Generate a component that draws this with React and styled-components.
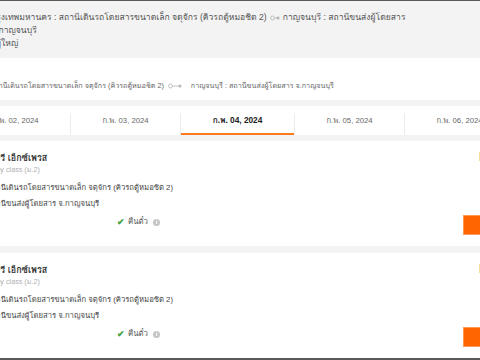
import React from "react";
import styled, { createGlobalStyle } from "styled-components";

const GlobalStyle = createGlobalStyle`
  html, body { margin: 0; padding: 0; background: #f3f3f3; overflow: hidden; }
  body { font-family: Tahoma, "Liberation Sans", Loma, Garuda, "Noto Sans Thai", sans-serif; }
`;

const Frame = styled.div`
  width: 480px;
  height: 360px;
  box-sizing: border-box;
  border-top: 1px solid #5a5a5a;
  border-bottom: 2px solid #5a5a5a;
  background: #f3f3f3;
  overflow: hidden;
`;

const Inner = styled.div`
  margin-left: -40px;
  width: 600px;
  display: flex;
  flex-direction: column;
`;

const Header = styled.div`
  background: #f3f3f3;
  padding: 10px 0 8px 31px;
  height: 57px;
  box-sizing: border-box;
  color: #555;
  font-size: 8.6px;
  line-height: 13px;
`;

const HeaderText = styled.div`
  width: 435px;
  padding-left: ${(p) => p.$indent || 0}px;
`;

const RouteBar = styled.div`
  background: #fff;
  height: 42px;
  box-sizing: border-box;
  padding: 21px 0 0 30px;
  color: #666;
  font-size: 7.2px;
  line-height: 14px;
  margin-bottom: 6px;
  white-space: nowrap;
`;

const Connector = styled.svg`
  display: inline-block;
  vertical-align: middle;
  margin: 0 ${(p) => p.$right}px 0 ${(p) => p.$left}px;
`;

const Tabs = styled.div`
  background: #fff;
  height: 29px;
  display: flex;
  align-items: stretch;
  padding-left: 1px;
  margin-bottom: 6px;
`;

const Tab = styled.div`
  flex: 0 0 ${(p) => (p.$active ? 113 : 109)}px;
  display: flex;
  align-items: center;
  justify-content: center;
  box-sizing: border-box;
  font-size: ${(p) => (p.$active ? 8.3 : 7.7)}px;
  color: ${(p) => (p.$active ? "#222" : "#666")};
  font-weight: ${(p) => (p.$active ? 700 : 400)};
  border-bottom: 2px solid ${(p) => (p.$active ? "#ff7a1f" : "transparent")};
  padding-top: 1px;
  white-space: nowrap;
`;

const Divider = styled.div`
  flex: 0 0 1px;
  background: #ececec;
  margin: 7px 0 0;
`;

const Card = styled.div`
  background: #fff;
  height: 105px;
  display: flex;
  padding-left: 5px;
  margin-bottom: 7px;
`;

const LeftCol = styled.div`
  width: 347px;
  padding-top: 11px;
  display: flex;
  flex-direction: column;
`;

const Name = styled.div`
  font-size: 9px;
  line-height: 12px;
  font-weight: 700;
  color: #333;
  white-space: nowrap;
`;

const ClassName = styled.div`
  padding-left: 9px;
  font-size: 7.2px;
  line-height: 11px;
  color: #b0b0b0;
  white-space: nowrap;
`;

const Stations = styled.div`
  padding-left: 22px;
  margin-top: 7px;
  display: flex;
  flex-direction: column;
  gap: 4px;
  font-size: 7.7px;
  line-height: 12px;
  color: #444;
  white-space: nowrap;
`;

const Refund = styled.div`
  margin-top: 6px;
  display: flex;
  justify-content: center;
  align-items: center;
  gap: 3px;
  font-size: 7.8px;
  line-height: 12px;
  color: #555;
`;

const Check = styled.span`
  color: #3fa33f;
  font-size: 9px;
  font-weight: 700;
`;

const Info = styled.span`
  display: inline-flex;
  width: 7px;
  height: 7px;
  border-radius: 50%;
  background: #c4c4c4;
  color: #fff;
  font-size: 6px;
  font-weight: 700;
  align-items: center;
  justify-content: center;
  margin-left: 2px;
`;

const RightCol = styled.div`
  margin-left: auto;
  width: 97px;
  display: flex;
  flex-direction: column;
  align-items: flex-start;
  padding: 10px 0 11px;
  box-sizing: border-box;
`;

const Price = styled.div`
  margin-left: 16px;
  color: #9a8063;
  font-size: 12px;
  line-height: 12px;
  font-weight: 700;
`;

const SelectButton = styled.button`
  margin-top: auto;
  width: 70px;
  height: 20px;
  background: #ff6600;
  border: 1px solid #ff9a55;
  color: #fff;
  font-size: 10px;
  padding: 0;
`;

const Conn = ({ w = 14, left = 4, right = 4 }) => (
  <Connector width={w} height="6" viewBox={`0 0 ${w} 6`} $left={left} $right={right}>
    <circle cx="2.5" cy="3" r="2" fill="none" stroke="#b5b5b5" strokeWidth="0.8" />
    <line x1="4.5" y1="3" x2={w - 2.5} y2="3" stroke="#b5b5b5" strokeWidth="0.8" />
    <circle cx={w - 2} cy="3" r="1.5" fill="#b5b5b5" />
  </Connector>
);

const ORIGIN = "สถานีเดินรถโดยสารขนาดเล็ก จตุจักร (คิวรถตู้หมอชิต 2)";
const DEST = "สถานีขนส่งผู้โดยสาร จ.กาญจนบุรี";

const dates = ["ก.พ. 02, 2024", "ก.พ. 03, 2024", "ก.พ. 04, 2024", "ก.พ. 05, 2024", "ก.พ. 06, 2024"];

const TripCard = () => (
  <Card>
    <LeftCol>
      <Name>กาญจนบุรี เอ็กซ์เพรส</Name>
      <ClassName>Economy class (ม.2)</ClassName>
      <Stations>
        <div>{ORIGIN}</div>
        <div>{DEST}</div>
      </Stations>
      <Refund>
        <Check>✔</Check>
        <span>คืนตั๋ว</span>
        <Info>i</Info>
      </Refund>
    </LeftCol>
    <RightCol>
      <Price>฿150</Price>
      <SelectButton>เลือก</SelectButton>
    </RightCol>
  </Card>
);

export default function App() {
  return (
    <>
      <GlobalStyle />
      <Frame>
        <Inner>
          <Header>
            <HeaderText>
              กรุงเทพมหานคร : {ORIGIN}
              <Conn w={10} left={3} right={3} />
              กาญจนบุรี : {DEST}
            </HeaderText>
            <HeaderText $indent={5}>ผู้ใหญ่</HeaderText>
          </Header>
          <RouteBar>
            {ORIGIN}
            <Conn w={14} left={4} right={9} />
            กาญจนบุรี : {DEST}
          </RouteBar>
          <Tabs>
            {dates.map((d, i) => (
              <React.Fragment key={d}>
                {i > 0 && <Divider />}
                <Tab $active={i === 2}>{d}</Tab>
              </React.Fragment>
            ))}
          </Tabs>
          <TripCard />
          <TripCard />
        </Inner>
      </Frame>
    </>
  );
}
